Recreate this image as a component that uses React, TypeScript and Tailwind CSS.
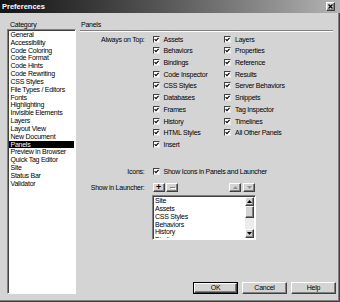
const categories = [
  "General",
  "Accessibility",
  "Code Coloring",
  "Code Format",
  "Code Hints",
  "Code Rewriting",
  "CSS Styles",
  "File Types / Editors",
  "Fonts",
  "Highlighting",
  "Invisible Elements",
  "Layers",
  "Layout View",
  "New Document",
  "Panels",
  "Preview in Browser",
  "Quick Tag Editor",
  "Site",
  "Status Bar",
  "Validator",
];

const colOne = [
  "Assets",
  "Behaviors",
  "Bindings",
  "Code Inspector",
  "CSS Styles",
  "Databases",
  "Frames",
  "History",
  "HTML Styles",
  "Insert",
];

const colTwo = [
  "Layers",
  "Properties",
  "Reference",
  "Results",
  "Server Behaviors",
  "Snippets",
  "Tag Inspector",
  "Timelines",
  "All Other Panels",
];

const launcher = ["Site", "Assets", "CSS Styles", "Behaviors", "History", "Bindings"];

const raised =
  "bg-[#d4d4d4] border border-t-white border-l-white border-r-[#404040] border-b-[#404040] shadow-[inset_-1px_-1px_#808080]";

function Check() {
  return (
    <span className="w-[7px] h-[7px] shrink-0 bg-white border border-t-[#404040] border-l-[#404040] border-r-[#e4e4e4] border-b-[#e4e4e4] flex items-center justify-center">
      <svg viewBox="0 0 5 5" className="w-[5px] h-[5px]">
        <path d="M0.6 2.2 L2 3.6 L4.6 0.9" stroke="#000" strokeWidth="1.2" fill="none" />
      </svg>
    </span>
  );
}

function CheckRow({ label }: { label: string }) {
  return (
    <div className="h-[11.7px] flex items-center">
      <Check />
      <span className="ml-[4px] whitespace-nowrap">{label}</span>
    </div>
  );
}

function Arrow({ up, color = "#000" }: { up?: boolean; color?: string }) {
  return (
    <svg viewBox="0 0 5 3" className="w-[5px] h-[3px]">
      <path d={up ? "M0 3 L2.5 0 L5 3 Z" : "M0 0 L5 0 L2.5 3 Z"} fill={color} />
    </svg>
  );
}

export default function App() {
  return (
    <div className="w-[340px] h-[302px] bg-[#d4d4d4] flex flex-col overflow-hidden text-black text-[7px] leading-[9px] tracking-[-0.25px] font-['Liberation_Sans',Arial,sans-serif] shadow-[inset_-1px_-1px_#404040,inset_-2px_-2px_#808080]">
      <div className="h-[13px] shrink-0 flex items-center justify-between pl-[2px] pr-[5px] bg-linear-to-r from-[#141414] via-[#5a5a5a] to-[#b4b4b4]">
        <span className="text-white font-bold text-[7.5px] tracking-normal">Preferences</span>
        <span className={`w-[9px] h-[9px] flex items-center justify-center ${raised}`}>
          <svg viewBox="0 0 5 5" className="w-[5px] h-[5px]">
            <path d="M0.5 0.5 L4.5 4.5 M4.5 0.5 L0.5 4.5" stroke="#000" strokeWidth="1.2" />
          </svg>
        </span>
      </div>

      <div className="flex flex-1 pl-[7px]">
        <div className="w-[69px] flex flex-col pt-[7px]">
          <div className="pl-[3px]">Category</div>
          <div className="h-[265px] bg-white border border-t-[#808080] border-l-[#808080] border-r-white border-b-white shadow-[inset_1px_1px_#404040] p-[1px] overflow-hidden">
            {categories.map((c) => (
              <div
                key={c}
                className={`h-[7.84px] leading-[7.84px] pl-[1.5px] whitespace-nowrap ${
                  c === "Panels" ? "bg-black text-white" : ""
                }`}
              >
                {c}
              </div>
            ))}
          </div>
        </div>

        <div className="flex-1 ml-[4px] pr-[4px] pt-[7px] pb-[8.5px] flex flex-col">
          <div className="pl-[1px]">Panels</div>
          <div className="mt-[1px] mr-[3px] h-[2px] border-t border-t-[#808080] border-b border-b-white" />

          <div className="mt-[1.35px] flex">
            <div className="w-[64.5px] h-[11.7px] flex items-center justify-end whitespace-nowrap">
              Always on Top:
            </div>
            <div className="ml-[8px] w-[71.5px] flex flex-col">
              {colOne.map((l) => (
                <CheckRow key={l} label={l} />
              ))}
            </div>
            <div className="flex flex-col">
              {colTwo.map((l) => (
                <CheckRow key={l} label={l} />
              ))}
            </div>
          </div>

          <div className="mt-[15.8px] flex h-[11.7px] items-center">
            <div className="w-[64.5px] text-right">Icons:</div>
            <div className="ml-[8px]">
              <CheckRow label="Show Icons in Panels and Launcher" />
            </div>
          </div>

          <div className="mt-[5px] flex h-[9px] items-center">
            <div className="w-[64.5px] text-right whitespace-nowrap">Show in Launcher:</div>
            <div className={`ml-[8px] w-[12px] h-[9px] flex items-center justify-center font-bold text-[9px] leading-none ${raised}`}>
              +
            </div>
            <div className={`ml-[1.5px] w-[12px] h-[9px] flex items-center justify-center ${raised}`}>
              <span className="w-[5px] h-[1px] bg-[#808080] shadow-[1px_1px_white]" />
            </div>
            <div className={`ml-[51px] w-[12px] h-[9px] flex items-center justify-center ${raised}`}>
              <Arrow up color="#909090" />
            </div>
            <div className={`ml-[2px] w-[12px] h-[9px] flex items-center justify-center ${raised}`}>
              <Arrow color="#909090" />
            </div>
          </div>

          <div className="mt-[3.65px] ml-[72px] w-[104px] h-[45px] bg-white border border-t-[#808080] border-l-[#808080] border-r-white border-b-white shadow-[inset_1px_1px_#404040] p-[1px] flex overflow-hidden">
            <div className="flex-1 overflow-hidden">
              {launcher.map((l) => (
                <div key={l} className="h-[7.75px] leading-[7.75px] pl-[1px] whitespace-nowrap">
                  {l}
                </div>
              ))}
            </div>
            <div className="w-[9px] flex flex-col bg-[#ececec]">
              <div className={`h-[9px] flex items-center justify-center ${raised}`}>
                <Arrow up />
              </div>
              <div className={`h-[12px] ${raised}`} />
              <div className="flex-1" />
              <div className={`h-[9px] flex items-center justify-center ${raised}`}>
                <Arrow />
              </div>
            </div>
          </div>

          <div className="flex-1" />

          <div className="flex justify-end gap-[4px]">
            <div className="w-[45px] h-[12px] border border-black flex">
              <div className={`flex-1 flex items-center justify-center ${raised}`}>OK</div>
            </div>
            <div className={`w-[45px] h-[12px] flex items-center justify-center ${raised}`}>Cancel</div>
            <div className={`w-[45px] h-[12px] flex items-center justify-center ${raised}`}>Help</div>
          </div>
        </div>
      </div>
    </div>
  );
}
